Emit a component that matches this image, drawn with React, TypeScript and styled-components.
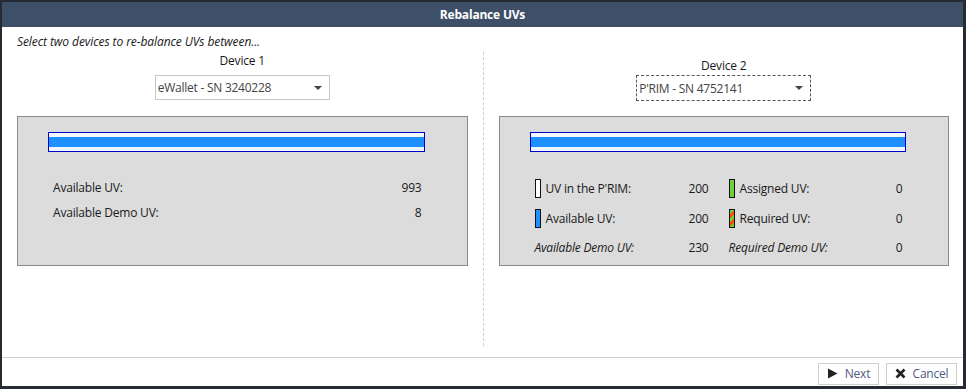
import React from "react";
import styled, { createGlobalStyle, css } from "styled-components";

const GlobalStyle = createGlobalStyle`
  html, body {
    margin: 0;
    padding: 0;
    background: #252a33;
  }
  body {
    font-family: "Open Sans", "Noto Sans", sans-serif;
    font-size: 12px;
    color: #1a1a1a;
  }
`;

const Window = styled.div`
  width: 961px;
  height: 384px;
  margin: 2px 3px 3px 2px;
  background: #fff;
  display: flex;
  flex-direction: column;
`;

const TitleBar = styled.div`
  height: 25px;
  background: #3d5068;
  color: #fff;
  font-weight: 700;
  font-size: 12px;
  display: flex;
  align-items: center;
  justify-content: center;
  letter-spacing: -0.2px;
`;

const Body = styled.div`
  flex: 1;
  display: flex;
  flex-direction: column;
  padding: 6px 14px 0 15px;
`;

const Intro = styled.div`
  font-style: italic;
  font-size: 12px;
  letter-spacing: -0.08px;
  height: 18px;
  line-height: 18px;
`;

const Columns = styled.div`
  flex: 1;
  display: grid;
  grid-template-columns: 1fr 1px 1fr;
  column-gap: 15px;
`;

const Divider = styled.div`
  margin: 1px 0 11px;
  border-left: 1px dashed #cfcfcf;
`;

const Column = styled.div`
  display: flex;
  flex-direction: column;
  align-items: center;
`;

const DeviceLabel = styled.div<{ $offset: number }>`
  margin-top: ${(p) => p.$offset}px;
  height: 18px;
  line-height: 18px;
  font-size: 12px;
  letter-spacing: -0.2px;
`;

const Combo = styled.div<{ $focused?: boolean }>`
  box-sizing: border-box;
  width: 175px;
  height: ${(p) => (p.$focused ? 26 : 25)}px;
  border: 1px solid #c8c8c8;
  ${(p) =>
    p.$focused &&
    css`
      border: 1px dashed #555;
    `}
  display: flex;
  align-items: center;
  justify-content: space-between;
  padding: 0 5px 0 2px;
  color: #444;
  font-size: 12px;
  letter-spacing: -0.25px;
`;

const Caret = styled.span`
  width: 0;
  height: 0;
  border-left: 4px solid transparent;
  border-right: 4px solid transparent;
  border-top: 4px solid #444;
  margin-right: 2px;
`;

const Panel = styled.div`
  box-sizing: border-box;
  align-self: stretch;
  height: 150px;
  margin-top: auto;
  margin-bottom: 91px;
  background: #dcdcdc;
  border: 1px solid #8a8a8a;
  padding: 15px 42px 0 30px;
`;

const Bar = styled.div`
  box-sizing: border-box;
  height: 20px;
  border: 1px solid #0000cc;
  background: #f2f8ff;
  padding: 4px 0;
`;

const BarFill = styled.div`
  height: 10px;
  background: #1e90ff;
`;

const Rows = styled.div<{ $top: number; $gap: number }>`
  margin-top: ${(p) => p.$top}px;
  display: flex;
  flex-direction: column;
  gap: ${(p) => p.$gap}px;
`;

const SimpleRow = styled.div`
  display: flex;
  justify-content: space-between;
  padding: 0 3px 0 5px;
  height: 18px;
  line-height: 18px;
  letter-spacing: -0.2px;
`;

const LegendGrid = styled.div`
  margin-top: 27px;
  margin-left: 5px;
  display: grid;
  grid-template-columns: 174px 174px;
  column-gap: 20px;
  row-gap: 10.5px;
`;

const LegendItem = styled.div<{ $italic?: boolean }>`
  display: flex;
  align-items: center;
  height: 19px;
  letter-spacing: -0.2px;
  font-style: ${(p) => (p.$italic ? "italic" : "normal")};
`;

const swatchStyles = {
  empty: css`background: #fff;`,
  blue: css`background: #1e90ff;`,
  green: css`background: #6fd13a;`,
  striped: css`
    background: repeating-linear-gradient(
      135deg,
      #6fd13a 0 3px,
      #ff4a10 3px 6px
    );
  `,
};

const Swatch = styled.span<{ $kind: keyof typeof swatchStyles }>`
  box-sizing: border-box;
  width: 6px;
  height: 19px;
  border: 1px solid #111;
  margin-right: 5px;
  flex-shrink: 0;
  ${(p) => swatchStyles[p.$kind]}
`;

const LegendText = styled.span`
  flex: 1;
`;

const LegendValue = styled.span`
  text-align: right;
  font-style: normal;
`;

const Footer = styled.div`
  height: 28px;
  border-top: 1px solid #cfcfcf;
  display: flex;
  align-items: center;
  justify-content: flex-end;
  gap: 7px;
  padding: 0 6px;
`;

const Button = styled.button<{ $w: number }>`
  box-sizing: border-box;
  width: ${(p) => p.$w}px;
  height: 22px;
  border: 1px solid #cfcfcf;
  background: #fff;
  color: #4b5a80;
  font-family: inherit;
  font-size: 12px;
  letter-spacing: -0.2px;
  display: flex;
  align-items: center;
  justify-content: center;
  gap: 7px;
  padding: 0;
  margin-top: 3px;
`;

const Icon = styled.svg`
  display: block;
`;

type Legend = {
  swatch?: keyof typeof swatchStyles;
  label: string;
  value: number;
  italic?: boolean;
};

const legend: Legend[] = [
  { swatch: "empty", label: "UV in the P'RIM:", value: 200 },
  { swatch: "green", label: "Assigned UV:", value: 0 },
  { swatch: "blue", label: "Available UV:", value: 200 },
  { swatch: "striped", label: "Required UV:", value: 0 },
  { label: "Available Demo UV:", value: 230, italic: true },
  { label: "Required Demo UV:", value: 0, italic: true },
];

export default function App() {
  return (
    <>
      <GlobalStyle />
      <Window>
        <TitleBar>Rebalance UVs</TitleBar>
        <Body>
          <Intro>Select two devices to re-balance UVs between...</Intro>
          <Columns>
            <Column>
              <DeviceLabel $offset={1}>Device 1</DeviceLabel>
              <Combo style={{ marginTop: 5 }}>
                eWallet - SN 3240228
                <Caret />
              </Combo>
              <Panel>
                <Bar>
                  <BarFill />
                </Bar>
                <Rows $top={27} $gap={7}>
                  <SimpleRow>
                    <span>Available UV:</span>
                    <span>993</span>
                  </SimpleRow>
                  <SimpleRow>
                    <span>Available Demo UV:</span>
                    <span>8</span>
                  </SimpleRow>
                </Rows>
              </Panel>
            </Column>
            <Divider />
            <Column>
              <DeviceLabel $offset={6}>Device 2</DeviceLabel>
              <Combo $focused>
                P'RIM - SN 4752141
                <Caret />
              </Combo>
              <Panel>
                <Bar>
                  <BarFill />
                </Bar>
                <LegendGrid>
                  {legend.map((l) => (
                    <LegendItem key={l.label} $italic={l.italic}>
                      {l.swatch && <Swatch $kind={l.swatch} />}
                      <LegendText>{l.label}</LegendText>
                      <LegendValue>{l.value}</LegendValue>
                    </LegendItem>
                  ))}
                </LegendGrid>
              </Panel>
            </Column>
          </Columns>
        </Body>
        <Footer>
          <Button $w={61}>
            <Icon width="11" height="11" viewBox="0 0 11 11">
              <path d="M1 0.5 L10.5 5.5 L1 10.5 Z" fill="#222" />
            </Icon>
            Next
          </Button>
          <Button $w={71}>
            <Icon width="11" height="11" viewBox="0 0 11 11">
              <path d="M1.5 1.5 L9.5 9.5 M9.5 1.5 L1.5 9.5" stroke="#222" strokeWidth="2.6" />
            </Icon>
            Cancel
          </Button>
        </Footer>
      </Window>
    </>
  );
}
